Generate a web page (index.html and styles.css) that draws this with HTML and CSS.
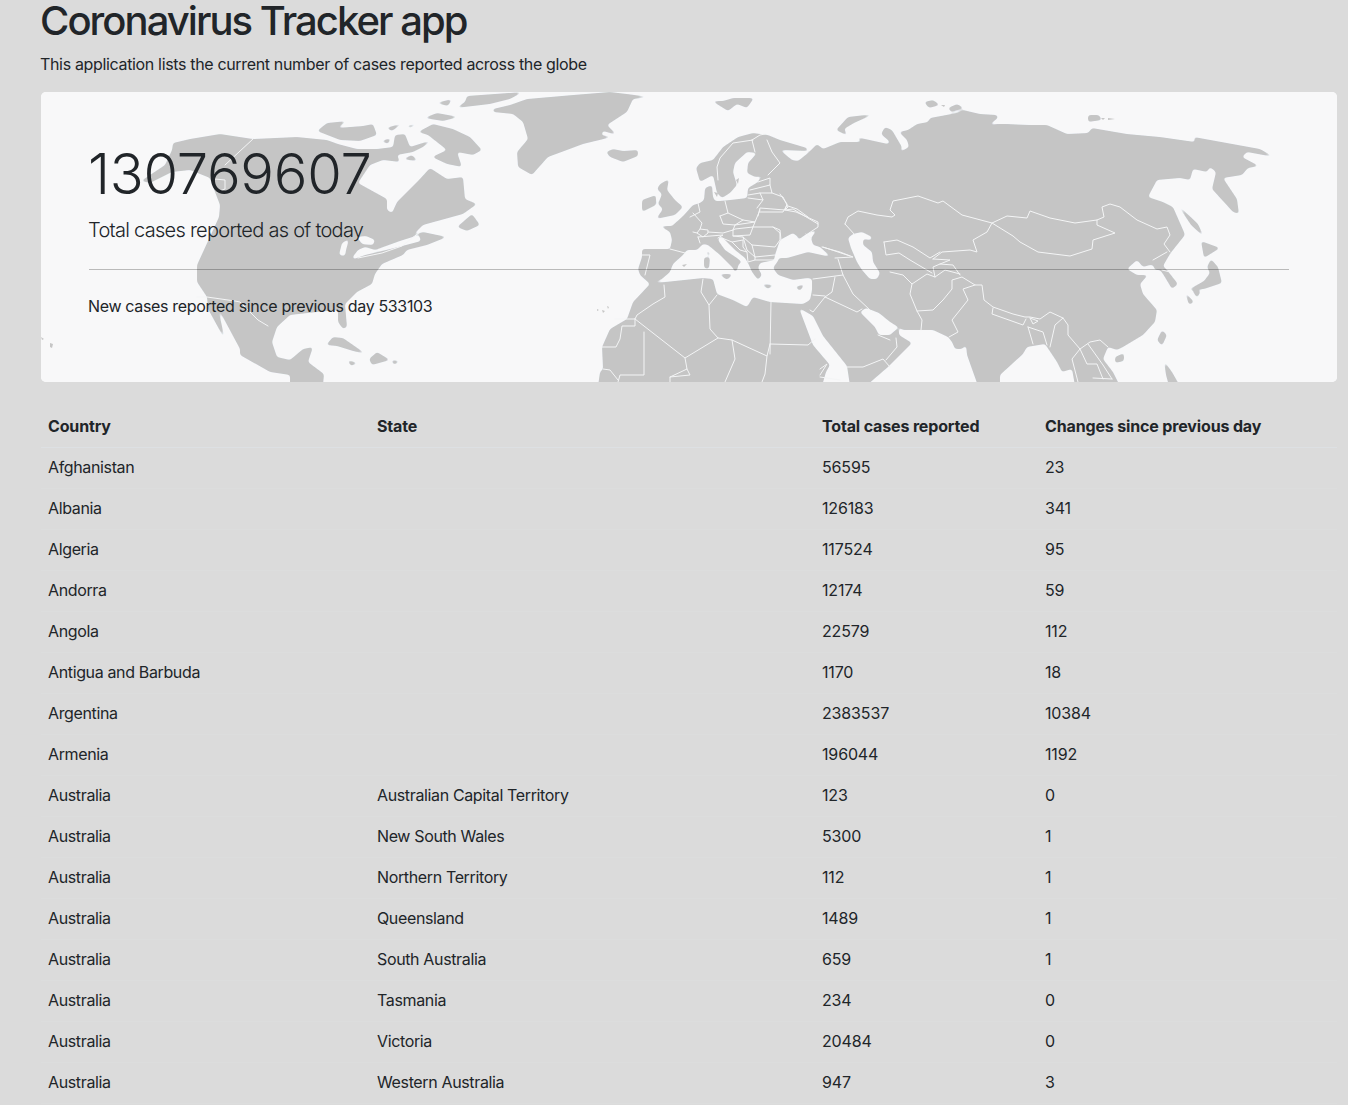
FILE: index.html
```html
<!DOCTYPE html>
<html lang="en">
<head>
<meta charset="utf-8">
<title>Coronavirus Tracker app</title>
<link rel="stylesheet" href="styles.css">
</head>
<body>
<main class="page">
  <h1 class="title">Coronavirus Tracker app</h1>
  <p class="subtitle">This application lists the current number of cases reported across the globe</p>
  <section class="hero">
    <svg class="map" viewBox="41 92 1296 290" aria-hidden="true">
      <defs>
        <filter id="smooth" x="0" y="0" width="1" height="1" color-interpolation-filters="sRGB">
          <feGaussianBlur stdDeviation="1.5"/>
          <feComponentTransfer>
            <feFuncR type="table" tableValues=".776 .776 .776 .776 .776 .776 .776 .776 .776 .776 .776 .776 .776 .776 .776 .776 .776 .776 .776 .776 .776 .776 .776 .776 .776 .776 .776 .776 .776 .776 .776 .776 .776 .776 .776 .875 .973 .973 .973 .973 .973"/>
            <feFuncG type="table" tableValues=".776 .776 .776 .776 .776 .776 .776 .776 .776 .776 .776 .776 .776 .776 .776 .776 .776 .776 .776 .776 .776 .776 .776 .776 .776 .776 .776 .776 .776 .776 .776 .776 .776 .776 .776 .875 .976 .976 .976 .976 .976"/>
            <feFuncB type="table" tableValues=".776 .776 .776 .776 .776 .776 .776 .776 .776 .776 .776 .776 .776 .776 .776 .776 .776 .776 .776 .776 .776 .776 .776 .776 .776 .776 .776 .776 .776 .776 .776 .776 .776 .776 .776 .875 .98 .98 .98 .98 .98"/>
          </feComponentTransfer>
        </filter>
      </defs>
      <g class="landmass">
        <rect class="sea" x="30" y="80" width="1320" height="320"/>
        <!-- North America -->
        <path class="land" d="M173 143L190 139L220 134L253 139L297 137L327 140L338 144L357 149L377 149L393 147L395 135L405 134L410 147L432 140L423 147L413 152L397 155L400 162L383 160L370 165L358 183L387 199L387 210L392 213L397 202L417 182L430 168L447 179L463 177L465 199L477 204L463 214L423 225L413 235L423 232L447 237L427 245L407 250L403 255L382 264L375 274L372 284L357 292L345 304L347 327L343 329L338 322L338 310L317 312L290 315L277 327L272 342L277 357L290 360L303 349L313 347L308 362L324 374L323 386L290 386L290 375L270 372L240 355L240 349L218 308L225 340L208 309L207 297L197 282L197 265L219 217L220 205L215 192L210 178L190 170L172 172L150 183L141 181L165 165L172 150Z"/>
        <path class="sea" d="M339 255L342 243L349 239L346 250L345 256ZM352 258L358 250L365 247L375 250L400 241L419 235L421 241L402 246L382 251L365 255L354 259ZM357 237L366 236L375 240L373 245L362 244Z"/>
        <path class="land" d="M457 227L472 214L480 225L467 231Z"/>
        <path class="land" d="M418 132L433 124L453 129L470 137L482 150L473 155L457 152L462 167L447 164L432 157L447 150L428 135Z"/>
        <path class="land" d="M317 131L327 123L347 121L337 128L363 126L373 124L377 135L360 141L340 140Z"/>
        <path class="land" d="M467 96L523 92L510 99L490 104L456 108L465 102ZM424 118L437 113L459 117L443 121ZM436 103L452 99L448 106ZM386 128L403 123L392 131ZM406 126L419 123L410 128ZM381 141L391 138L388 144ZM403 159L412 155L418 161L408 160Z"/>
        <path class="land" d="M326 345L333 337L343 338L366 354L353 351L337 346ZM369 359L377 352L390 360L372 365ZM347 360L358 363L351 366ZM391 360L400 361L394 365Z"/>
        <!-- Greenland, Iceland, Svalbard, British Isles -->
        <path class="land" d="M493 109L510 105L527 99L573 95L610 92L627 94L650 97L633 99L627 112L607 125L617 135L603 131L601 135L612 137L583 144L567 150L548 157L532 175L518 167L517 152L528 139L523 122L513 114L493 112Z"/>
        <path class="land" d="M606 152L613 149L623 151L638 150L638 156L623 162L610 157ZM712 101L723 101L733 98L754 98L747 108L737 104L728 111L720 106ZM660 184L669 179L667 190L675 200L683 207L675 215L656 219L663 209L658 204L662 194L657 189ZM642 200L656 195L656 205L642 212Z"/>
        <!-- Eurasia and Africa -->
        <path class="land" d="M598 386L600 372L603 369L602 347L610 329L627 319L633 302L650 284L640 275L638 269L642 257L642 249L670 249L672 240L670 232L660 226L672 226L683 216L693 205L700 203L704 200L705 188L712 185L713 197L715 201L720 201L730 200L747 198L748 188L758 182L760 178L776 175L755 177L747 173L748 163L757 153L747 152L735 163L733 172L737 185L730 193L722 198L717 193L713 175L700 182L696 168L700 163L713 160L723 147L738 137L753 133L768 135L780 140L807 148L808 151L780 150L792 160L798 161L808 153L817 144L823 149L840 142L862 142L856 137L888 144L890 142L881 134L885 127L892 130L899 142L902 147L900 152L909 147L907 140L899 132L908 130L917 124L928 122L930 118L957 113L963 110L980 114L997 115L998 118L989 125L997 124L1007 124L1030 125L1047 125L1067 134L1088 133L1092 128L1127 134L1160 137L1195 142L1194 137L1260 149L1274 157L1247 152L1242 157L1259 166L1248 168L1242 175L1223 178L1237 199L1239 214L1233 212L1212 189L1216 172L1210 167L1207 172L1193 169L1190 180L1180 178L1157 180L1148 197L1163 202L1173 207L1184 232L1185 235L1173 250L1170 254L1163 266L1167 270L1178 284L1172 289L1163 274L1160 270L1155 270L1153 265L1150 265L1143 267L1137 260L1127 269L1137 275L1148 275L1140 284L1143 294L1157 310L1155 322L1143 335L1123 347L1117 350L1108 347L1103 359L1113 372L1120 386L1075 386L1072 369L1062 372L1057 362L1045 344L1027 347L1023 354L1000 375L1000 386L978 386L967 355L966 345L962 349L955 349L952 342L948 337L933 330L920 330L903 330L890 322L879 313L866 308L860 312L875 327L879 335L890 335L899 327L899 335L912 343L888 367L866 386Z"/>
        <path class="sea" d="M653 283L662 279L670 272L673 264L683 255L687 250L697 250L703 244L708 245L720 255L733 268L735 273L738 268L738 265L742 262L737 258L725 250L718 240L720 236L723 238L735 250L745 258L748 263L752 272L758 280L762 275L758 268L760 263L775 260L777 262L773 268L778 275L793 280L808 278L812 279L812 290L810 300L803 304L770 302L753 297L747 307L733 300L717 294L713 279L703 278L665 282Z"/>
        <path class="sea" d="M775 255L780 240L793 233L798 237L798 240L808 233L817 230L811 238L813 245L820 247L831 257L808 252L787 258L779 258L777 263L774 261Z"/>
        <path class="sea" d="M848 238L853 234L862 232L872 237L871 240L863 239L863 245L872 252L873 262L880 273L877 279L870 279L862 270L857 262L851 248Z"/>
        <path class="sea" d="M799 308L813 345L830 365L826 372L822 386L850 386L847 366L823 336L813 316Z"/>
        <path class="land" d="M719 274L733 274L727 280ZM704 257L710 258L709 269L704 268ZM706 251L710 252L709 258ZM761 284L774 285L768 289ZM795 287L805 284L800 291Z"/>
        <!-- East Asian islands -->
        <path class="land" d="M836 130L848 117L874 114L854 123L844 129L848 136ZM924 102L933 100L940 105L929 108ZM948 108L957 104L964 108L951 112ZM1088 115L1099 115L1102 120L1088 122Z"/>
        <path class="land" d="M1177 204L1198 224L1204 237L1191 225ZM1201 241L1220 248L1204 258ZM1211 259L1218 267L1222 283L1204 289L1188 290L1204 281L1210 273L1207 267ZM1192 290L1201 291L1197 298ZM1185 292L1194 302L1189 305ZM1162 330L1167 335L1162 346L1157 340ZM1164 361L1172 372L1180 386L1169 386L1166 375ZM1115 357L1124 353L1124 361L1115 363Z"/>
      </g>
      <!-- Tiny islands that are drawn outside the smoothing filter -->
      <path class="land" d="M41 337L44 339L42 340ZM50 343L53 344L52 348L50 347ZM597 309L599 310L597 311ZM602 310L605 311L603 313ZM607 306L609 307L608 309ZM682 265L687 264L684 267ZM941 105L945 105L944 107ZM1101 118L1105 118L1103 120ZM1108 118L1115 119L1108 120ZM714 192L718 193L717 197ZM736 180L739 178L738 184Z"/>
      <!-- Borders -->
      <g class="borders">
        <path d="M253 139L225 165M215 179L225 180L225 189L217 192M197 297L207 297L235 301L240 302L258 320L268 326M358 258L382 253L402 246L420 232"/>
        <path d="M845 224L848 217L858 211L877 215L892 217L895 215L890 210L893 201L918 196L938 203L943 201L962 215L992 223L1007 216L1017 217L1027 218L1030 211L1050 218L1075 223L1097 220L1104 217L1102 207L1110 204L1120 207L1137 220L1157 229L1167 227L1170 235L1164 244L1170 252M1097 220L1097 225L1115 233L1093 240L1092 249L1070 256L1038 252L1020 242L1013 236L992 223L987 232L973 240L977 252L970 250L942 252L933 259M845 224L855 235M884 242L897 240L913 247L930 258L940 252M884 242L886 255L899 253L910 260L932 273M890 272L903 275L912 284L927 274L935 277L945 270L960 274M933 259L950 260L940 264L933 267L935 277M940 264L953 265L960 275M912 284L910 294L917 311L922 320L921 330M917 311L933 310L943 300L952 289L952 280L962 277L975 285L982 285L984 300L993 307L1013 314L1025 317L1030 317L1040 319L1050 312L1063 318L1068 325L1068 335L1080 349L1090 342L1100 340L1108 347"/>
        <path d="M975 285L963 289L968 300L952 320L958 332L949 337M993 308L992 314L1023 325L1026 319M1030 318L1038 321L1033 324L1030 318M1028 327L1033 344M1028 327L1043 332L1047 345M1063 318L1055 325L1050 347M1080 349L1072 359L1078 382M1080 349L1087 364L1097 364L1103 379M1088 344L1103 365L1112 379M1093 378L1112 379M1153 260L1167 252M1162 270L1170 272"/>
        <path d="M823 247L850 256M838 259L843 275L853 294L870 310M813 279L843 275M835 277L832 292L825 297L857 312L862 309M825 297L813 312L810 310M813 295L825 296M847 367L863 367L883 359L890 367M886 360L897 347L896 338M878 335L890 340M820 369L827 364L820 375M820 377L840 380"/>
        <path d="M771 302L770 354M770 344L808 345L815 339M703 279L701 292L709 305L717 295M709 305L710 329L718 338L732 340L767 356L770 344M664 285L665 297L653 304L637 315L635 319L615 319M635 319L635 326L622 326L620 339L616 347L602 347M635 319L685 358L718 338M685 358L687 369L670 377L670 382M644 332L644 375L620 375L618 382M603 369L610 370L618 380M732 340L735 359L725 382M767 356L765 374L762 382M670 377L690 375L687 369"/>
        <path d="M753 140L733 143L720 158L717 167L718 180M752 140L755 152M752 140L760 135L765 134M767 140L772 152L780 163L768 175M758 182L770 178L770 185L750 190M770 185L772 193L760 193L748 195M760 193L763 200L748 198M772 193L783 197L788 207L785 210L760 208L758 216M763 200L757 208M788 206L797 209L808 217M725 201L728 213L720 216M698 203L700 212L690 217M760 212L783 212L787 205M728 213L743 220L755 222L760 210M720 216L723 224L735 225L743 220M735 225L755 222L753 227L735 229L733 230L723 233L708 232M735 225L733 230M693 213L702 223L700 229L708 230L708 233L703 237L697 233L700 229M698 237L700 243M698 237L723 235L718 238M753 227L750 235L733 236L733 230M753 227L773 227L780 233L780 240L775 247L752 245L743 237L733 236M752 245L755 257L775 255M743 237L747 250L755 257M722 238L732 242L743 240L743 247L747 252L740 250L732 242M747 252L748 262L755 260L755 257M755 260L775 260M773 227L780 230L781 240M670 249L685 253M642 255L650 255L645 275M693 232L697 233M811 238L806 234"/>
        <path d="M785 210L796 212L818 222L818 227L809 233M780 194L787 204L785 210L793 209L818 224M822 247L840 252L853 257L835 258"/>
      </g>
    </svg>
    <div class="hero-content">
      <div class="total">130769607</div>
      <p class="lead">Total cases reported as of today</p>
      <hr class="rule">
      <p class="new-cases">New cases reported since previous day 533103</p>
    </div>
  </section>
  <table class="cases">
    <colgroup>
      <col class="col-country">
      <col class="col-state">
      <col class="col-total">
      <col class="col-change">
    </colgroup>
    <thead>
      <tr><th>Country</th><th>State</th><th>Total cases reported</th><th>Changes since previous day</th></tr>
    </thead>
    <tbody>
      <tr><td>Afghanistan</td><td></td><td>56595</td><td>23</td></tr>
      <tr><td>Albania</td><td></td><td>126183</td><td>341</td></tr>
      <tr><td>Algeria</td><td></td><td>117524</td><td>95</td></tr>
      <tr><td>Andorra</td><td></td><td>12174</td><td>59</td></tr>
      <tr><td>Angola</td><td></td><td>22579</td><td>112</td></tr>
      <tr><td>Antigua and Barbuda</td><td></td><td>1170</td><td>18</td></tr>
      <tr><td>Argentina</td><td></td><td>2383537</td><td>10384</td></tr>
      <tr><td>Armenia</td><td></td><td>196044</td><td>1192</td></tr>
      <tr><td>Australia</td><td>Australian Capital Territory</td><td>123</td><td>0</td></tr>
      <tr><td>Australia</td><td>New South Wales</td><td>5300</td><td>1</td></tr>
      <tr><td>Australia</td><td>Northern Territory</td><td>112</td><td>1</td></tr>
      <tr><td>Australia</td><td>Queensland</td><td>1489</td><td>1</td></tr>
      <tr><td>Australia</td><td>South Australia</td><td>659</td><td>1</td></tr>
      <tr><td>Australia</td><td>Tasmania</td><td>234</td><td>0</td></tr>
      <tr><td>Australia</td><td>Victoria</td><td>20484</td><td>0</td></tr>
      <tr><td>Australia</td><td>Western Australia</td><td>947</td><td>3</td></tr>
    </tbody>
  </table>
</main>
</body>
</html>
```
FILE: styles.css
```css
* { box-sizing: border-box; }
html, body { margin: 0; padding: 0; }
body {
  background: #dbdbdb;
  color: #212529;
  font-family: Inter, "Liberation Sans", sans-serif;
  font-size: 16px;
  line-height: 1.5;
}
.page { padding: 0 11px 0 41px; }
.title {
  margin: 0 0 12px -1px;
  padding-top: 2px;
  font-size: 40px;
  font-weight: 500;
  line-height: 38px;
  letter-spacing: -1.96px;
}
.subtitle { margin: 0 0 16px -1px; letter-spacing: -0.34px; }
.hero {
  position: relative;
  overflow: hidden;
  margin-bottom: 24px;
  padding: 48px 48px 48px 47px;
  background: #f8f9fa;
  border-radius: 5px;
}
.map { position: absolute; inset: 0; width: 100%; height: 100%; }
.landmass { filter: url(#smooth); }
.land { fill: #c6c6c6; }
.sea { fill: #f8f9fa; }
.borders {
  fill: none;
  stroke: #f4f5f6;
  stroke-width: 1;
  stroke-linejoin: round;
  stroke-linecap: round;
}
.hero-content { position: relative; }
.total {
  margin-bottom: 8px;
  padding-top: 1px;
  font-size: 56px;
  font-weight: 300;
  line-height: 66px;
  letter-spacing: -0.25px;
}
.lead { margin: 0; font-size: 20px; font-weight: 300; letter-spacing: -0.72px; }
.rule { margin: 24px 0 24px 1px; border: 0; border-top: 1px solid rgba(0, 0, 0, 0.25); }
.new-cases { margin: 0 0 16px; letter-spacing: -0.34px; }
.cases { width: 100%; table-layout: fixed; border-collapse: collapse; }
.col-country { width: 329px; }
.col-state { width: 445px; }
.col-total { width: 223px; }
.col-change { width: 299px; }
.cases th, .cases td {
  height: 41px;
  padding: 8px 8px 8px 7px;
  text-align: left;
  vertical-align: top;
  border-bottom: 1px solid #dde0e3;
}
.cases th { font-weight: 700; letter-spacing: -0.15px; }
.cases td { padding-top: 7px; padding-bottom: 9px; letter-spacing: -0.36px; border-bottom-color: #dcdddd; }
.cases td:nth-child(n+3) { letter-spacing: -0.15px; }
```
